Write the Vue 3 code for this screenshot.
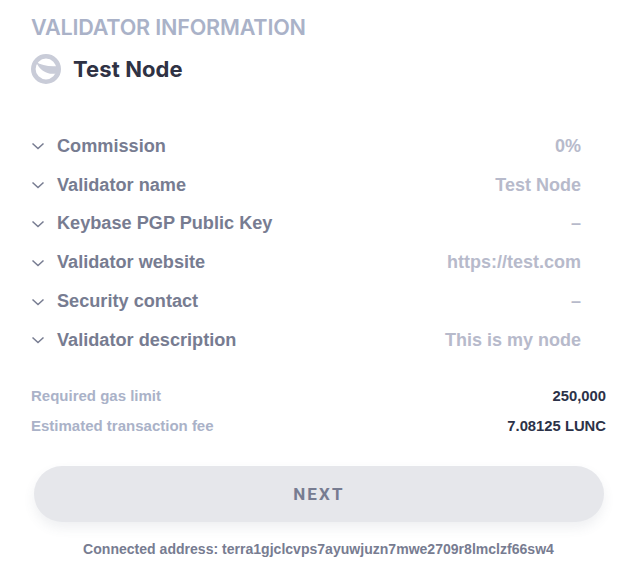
<script setup>
const rows = [
  ['Commission', '0%'],
  ['Validator name', 'Test Node'],
  ['Keybase PGP Public Key', '–'],
  ['Validator website', 'https://test.com'],
  ['Security contact', '–'],
  ['Validator description', 'This is my node'],
]
</script>

<template>
  <div class="page">
    <h2 class="title">VALIDATOR INFORMATION</h2>
    <div class="node">
      <svg class="logo" width="30" height="30" viewBox="0 0 30 30">
        <circle cx="15" cy="15" r="12.7" fill="none" stroke="#c9ccd8" stroke-width="4.6" />
        <path d="M5 8 C10 11 18 13 27 12 L27 19 C18 22 9 17 5 8 Z" fill="#c9ccd8" />
      </svg>
      <span class="node-name">Test Node</span>
    </div>
    <ul class="rows">
      <li v-for="r in rows" :key="r[0]" class="row">
        <svg class="chev" width="14" height="14" viewBox="0 0 14 14">
          <path d="M1.5 4.5 L7 9.6 L12.5 4.5" fill="none" stroke="#777c91" stroke-width="1.5" />
        </svg>
        <span class="label">{{ r[0] }}</span>
        <span class="value">{{ r[1] }}</span>
      </li>
    </ul>
    <div class="fee">
      <div class="fee-row"><span class="fee-label">Required gas limit</span><span class="fee-value">250,000</span></div>
      <div class="fee-row"><span class="fee-label">Estimated transaction fee</span><span class="fee-value">7.08125 LUNC</span></div>
    </div>
    <button class="next">NEXT</button>
    <p class="addr">Connected address: terra1gjclcvps7ayuwjuzn7mwe2709r8lmclzf66sw4</p>
  </div>
</template>

<style>
html, body { margin: 0; background: #fff; }
</style>

<style scoped>
.page { width: 642px; height: 577px; box-sizing: border-box; padding: 14px 36px 0 31px; font-family: "Liberation Sans", sans-serif; overflow: hidden; }
.title { margin: 0; font: 600 21.6px/27px Inter, sans-serif; letter-spacing: -0.2px; color: #aab2c8; }
.node { display: flex; align-items: center; gap: 12px; margin-top: 13px; height: 30px; }
.logo { flex: none; }
.node-name { font: 700 22px/30px Inter, sans-serif; letter-spacing: 0.1px; color: #2f3244; }
.rows { list-style: none; margin: 43px 0 0; padding: 0 25px 0 0; display: flex; flex-direction: column; }
.row { display: flex; align-items: center; height: 38.8px; font-size: 18px; font-weight: 700; }
.chev { flex: none; margin-right: 12px; }
.label { color: #777c91; font-size: 18.15px; }
.value { margin-left: auto; color: #b7bacb; }
.fee { margin-top: 27px; display: flex; flex-direction: column; gap: 12px; }
.fee-row { display: flex; justify-content: space-between; height: 18px; line-height: 18px; font-size: 15px; font-weight: 700; }
.fee-label { color: #aab2c8; }
.fee-value { color: #2c3248; font-size: 14.8px; }
.next { display: block; margin: 31px 0 0 3px; width: 570px; height: 56px; border: 0; border-radius: 28px; background: #e6e7eb; box-shadow: 0 6px 12px rgba(80, 85, 110, 0.09); color: #777c91; font: 700 17px Roboto, sans-serif; letter-spacing: 2.2px; }
.addr { margin: 18px 0 0; text-align: center; font-size: 14.05px; line-height: 18px; font-weight: 700; color: #777c91; }
</style>
